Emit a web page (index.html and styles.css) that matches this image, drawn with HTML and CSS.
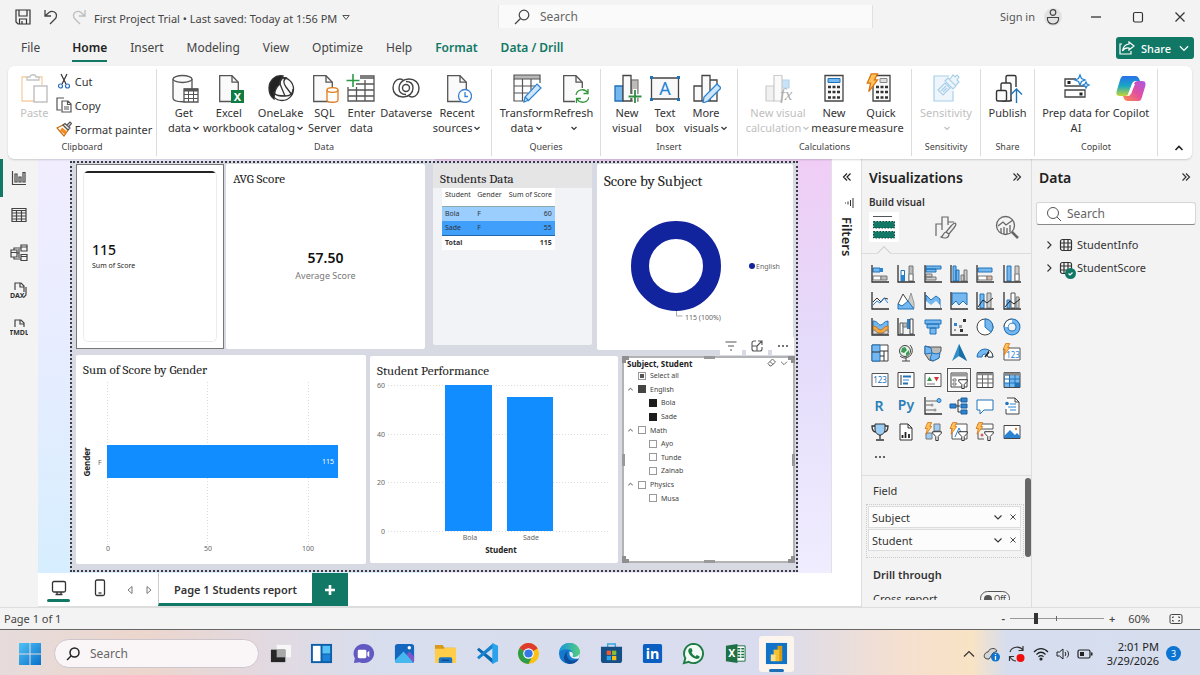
FILE: index.html
```html
<!DOCTYPE html>
<html lang="en">
<head>
<meta charset="utf-8">
<title>First Project Trial</title>
<link rel="stylesheet" href="styles.css">
</head>
<body>
<svg class="defs" aria-hidden="true">
  <symbol id="chev" viewBox="0 0 8 8"><path d="M1.500 3 4 5.500 6.500 3" fill="none" stroke="currentColor" stroke-width="1.200"/></symbol>
  <symbol id="thin" viewBox="0 0 12 12"><path d="M2.500 4.500 6 8l3.500-3.500" fill="none" stroke="currentColor" stroke-width="1.100"/></symbol>
  <symbol id="cross" viewBox="0 0 8 8"><path d="M1.500 1.500l5 5M6.500 1.500l-5 5" fill="none" stroke="currentColor" stroke-width=".9"/></symbol>
  <symbol id="doc" viewBox="0 0 20 28"><path d="M.7.7H13l6.300 6.500V26.500H.7z" fill="#fafafa" stroke="#555" stroke-width="1.300"/><path d="M13 .7v6.500h6.300" fill="none" stroke="#555" stroke-width="1.300"/></symbol>
  <symbol id="bolt" viewBox="0 0 10 16"><path d="M4 .7h5L6.500 5.500H9L2 15l1.500-7H.8z" fill="#ffc35c" stroke="#d9730d" stroke-width="1"/></symbol>
  <symbol id="funnel" viewBox="0 0 10 10"><path d="M.7.7h8.600v1.500L6.200 5.500v4H3.800v-4L.7 2.200z" fill="#fff" stroke="#333" stroke-width="1"/></symbol>
  <symbol id="dbl" viewBox="0 0 10 10"><path d="M1.500 1.500 5 5 1.500 8.500M5 1.500 8.500 5 5 8.500" fill="none" stroke="currentColor" stroke-width="1.200"/></symbol>
</svg>

<header class="titlebar">
  <div class="quick">
    <button class="plain" aria-label="Save"><svg width="16" height="16" viewBox="0 0 16 16" fill="none" stroke="#333" stroke-width="1.200"><path d="M1 1h14v14H3l-2-2zM4 1v6h8V1M4.500 15v-5h7v5M7 12v3"/></svg></button>
    <button class="plain" aria-label="Undo"><svg width="16" height="16" viewBox="0 0 16 16" fill="none" stroke="#444" stroke-width="1.300"><path d="M2 1v6h6M2 7l4-3.500c3-2.500 7.500-.5 7.500 3 0 1.500-.5 2.500-1.500 3.500l-5 5"/></svg></button>
    <button class="plain" aria-label="Redo" disabled><svg width="16" height="16" viewBox="0 0 16 16" fill="none" stroke="#bdbdbd" stroke-width="1.300"><path d="M14 1v6H8M14 7l-4-3.500c-3-2.500-7.500-.5-7.500 3 0 1.500.5 2.500 1.500 3.500l5 5"/></svg></button>
  </div>
  <button class="plain filename">First Project Trial • Last saved: Today at 1:56 PM <svg width="8" height="8" viewBox="0 0 8 8" fill="none" stroke="#555"><path d="M.8 1.500h6.400L4 5.500z"/></svg></button>
  <label class="topsearch"><svg width="16" height="16" viewBox="0 0 16 16" fill="none" stroke="#444" stroke-width="1.200"><circle cx="10" cy="6" r="4.800"/><path d="M6.500 9.500 1 15"/></svg><input type="search" placeholder="Search" aria-label="Search"></label>
  <div class="account"><button class="plain">Sign in</button><span class="avatar"><svg width="18" height="18" viewBox="0 0 18 18" fill="none" stroke="#444" stroke-width="1.200"><circle cx="9" cy="4.500" r="2.800"/><path d="M3.500 9.500h11c.8 4-2 6.500-5.500 6.500s-6.300-2.500-5.500-6.500z"/></svg></span></div>
  <div class="winbtns">
    <button class="plain" aria-label="Minimize"><svg width="12" height="12" viewBox="0 0 12 12" stroke="#333" stroke-width="1.300"><path d="M1 6h10"/></svg></button>
    <button class="plain" aria-label="Maximize"><svg width="12" height="12" viewBox="0 0 12 12" fill="none" stroke="#333" stroke-width="1.200"><rect x="1.500" y="1.500" width="9" height="9.500" rx="1.500"/></svg></button>
    <button class="plain" aria-label="Close"><svg width="12" height="12" viewBox="0 0 12 12" stroke="#333" stroke-width="1.200"><path d="M1.500 1.500l9 9M10.500 1.500l-9 9"/></svg></button>
  </div>
</header>

<nav class="tabs">
  <button class="tab">File</button><button class="tab active">Home</button><button class="tab">Insert</button><button class="tab">Modeling</button><button class="tab">View</button><button class="tab">Optimize</button><button class="tab">Help</button><button class="tab ctx">Format</button><button class="tab ctx">Data / Drill</button>
  <button class="share"><svg width="16" height="14" viewBox="0 0 16 14" fill="none" stroke="#fff" stroke-width="1.200"><path d="M3 3H1v10h11v-3"/><path d="M10 1l5 4-5 4V7C7 6.500 5 7.500 3.500 10 4 6 6.500 3.500 10 3z"/></svg>Share<svg width="14" height="14"><use href="#thin"/></svg></button>
</nav>

<section class="ribbon">
  <div class="group">
    <div class="items clip">
      <button class="rb off"><svg width="30" height="30" viewBox="0 0 30 30" fill="none" stroke-width="1.300"><path d="M8 4H3v24h13" stroke="#f7cfa5"/><path d="M20 4h3v8" stroke="#f7cfa5"/><path d="M8 7V4h3c0-3 6-3 6 0h3v3z" stroke="#c4c4c4" fill="#fff"/><rect x="15" y="13" width="13" height="16" stroke="#b9b9b9" fill="#fff"/></svg><span>Paste</span></button>
      <div class="stack">
        <button class="row"><svg width="16" height="16" viewBox="0 0 16 16" fill="none" stroke="#333" stroke-width="1.200"><path d="M5 1l5 10M11 1L6 11"/><circle cx="4.500" cy="13" r="2" stroke="#2a6fc4"/><circle cx="11.500" cy="13" r="2" stroke="#2a6fc4"/></svg>Cut</button>
        <button class="row"><svg width="16" height="16" viewBox="0 0 16 16" fill="none" stroke="#555" stroke-width="1.200"><path d="M5 13H1V1h7"/><path d="M6 4h6l3 3v8H6zM11.500 4v3.500H15M8 10h5M8 12h5" fill="#fff"/></svg>Copy</button>
        <button class="row"><svg width="16" height="16" viewBox="0 0 16 16" fill="none" stroke="#555" stroke-width="1.200"><path d="M1 7l6-3 5 5-4 6z" fill="#fff" stroke="#c66a13"/><path d="M4 9.500l5 4 2-3-5-4z" fill="#f28a1e" stroke="none"/><path d="M7 4l2-1.500L14 7l-2 2zM11 4l3-3 1.500 1.500L12.500 6" fill="#eee"/></svg>Format painter</button>
      </div>
    </div>
    <div class="glabel">Clipboard</div>
  </div>
  <div class="group">
    <div class="items sources">
      <button class="rb"><svg width="30" height="30" viewBox="0 0 30 30" fill="#fafafa" stroke="#555" stroke-width="1.300"><path d="M4 6v19c0 5 19 5 19 0V6"/><ellipse cx="13.500" cy="6" rx="9.500" ry="3.500"/><path d="M15 16h14v13H15z" fill="#fff"/><path d="M15 17h14" stroke-width="3"/><path d="M15 21.500h14M15 25.500h14M19.500 17v12M24.500 17v12" stroke-width="1"/></svg><span>Get<br>data<svg class="cv"><use href="#chev"/></svg></span></button>
      <button class="rb"><svg width="30" height="30" viewBox="0 0 30 30"><use href="#doc" x="5" y="2" width="20" height="28"/><path d="M17 17h13v13H17z" fill="#107c41"/><text x="23.500" y="28" text-anchor="middle" font-size="11" font-weight="700" fill="#fff">X</text></svg><span>Excel<br>workbook</span></button>
      <button class="rb"><svg width="30" height="30" viewBox="0 0 30 30" fill="none" stroke="#333" stroke-width="1.300"><circle cx="16" cy="16" r="11.500" fill="#fafafa"/><path d="M17 3C9 1 3 8 3 15c0 5 2 9 5 11 0-8 2-12 6-15 0-4 1-6 3-8z" fill="#222"/><path d="M14 11c0-5 3-7 7-6-4 1-4 5-1 9l6 8M14 11l5 12c-5 0-9 0-12-4M19 23c5 0 8-2 8-7"/></svg><span>OneLake<br>catalog<svg class="cv"><use href="#chev"/></svg></span></button>
      <button class="rb"><svg width="30" height="30" viewBox="0 0 30 30" fill="none"><use href="#doc" x="4" y="2" width="20" height="28"/><path d="M18 17v10c0 3 11 3 11 0V17" fill="#fff" stroke="#e07b1c" stroke-width="1.300"/><ellipse cx="23.500" cy="17" rx="5.500" ry="2.300" fill="#fff" stroke="#e07b1c" stroke-width="1.300"/></svg><span>SQL<br>Server</span></button>
      <button class="rb"><svg width="30" height="30" viewBox="0 0 30 30" fill="none" stroke="#555" stroke-width="1.300"><path d="M2 14v14h26V3H14M14 5h14M10 11h18M2 17h26M2 23h26M10.500 14v14M19 7v21"/><path d="M7 1v13M.5 7.500h13" stroke="#2e9a45" stroke-width="1.600"/></svg><span>Enter<br>data</span></button>
      <button class="rb"><svg width="30" height="30" viewBox="0 0 30 30" fill="none" stroke="#444" stroke-width="1.400"><circle cx="15" cy="15" r="3.500"/><path d="M15 8.500c5 0 7 3 7 6.500 0 5-4 9-10 9C6 24 2 20 2 15S5 6 9 6c1.500 0 2.500.5 3.500 1.500"/><path d="M15 21.500c-5 0-7-3-7-6.500 0-5 4-9 10-9 6 0 10 4 10 9s-3 9-7 9c-1.500 0-2.500-.5-3.500-1.500"/></svg><span>Dataverse</span></button>
      <button class="rb"><svg width="30" height="30" viewBox="0 0 30 30"><use href="#doc" x="5" y="2" width="20" height="28"/><circle cx="23" cy="23" r="6.500" fill="#fff" stroke="#3b82cf" stroke-width="1.300"/><path d="M23 19v4.500h3" fill="none" stroke="#3b82cf" stroke-width="1.300"/></svg><span>Recent<br>sources<svg class="cv"><use href="#chev"/></svg></span></button>
    </div>
    <div class="glabel">Data</div>
  </div>
  <div class="group">
    <div class="items queries">
      <button class="rb"><svg width="30" height="30" viewBox="0 0 30 30" fill="none" stroke="#555" stroke-width="1.200"><path d="M2 2h26v4H2z" fill="#b8b8b8"/><path d="M28 6v4M2 6v22h10M2 13h21M2 20h14M10.500 6v22M19 6v11"/><path d="M25 11l4 4-12 12-5 2 1-5z" fill="#cfe7fb" stroke="#2b83d1"/><path d="M13 24l4 4" stroke="#2b83d1"/></svg><span>Transform<br>data<svg class="cv"><use href="#chev"/></svg></span></button>
      <button class="rb"><svg width="30" height="30" viewBox="0 0 30 30"><use href="#doc" x="4" y="2" width="20" height="28"/><path d="M16 15h14v15H16z" fill="#fff"/><path d="M17 22c1-6 9-7 12-2M29 16v4.500h-4.500M30 24c-1 6-9 7-12 2M17.500 30v-4.500H22" fill="none" stroke="#35963f" stroke-width="1.300"/></svg><span>Refresh<br><svg class="cv"><use href="#chev"/></svg></span></button>
    </div>
    <div class="glabel">Queries</div>
  </div>
  <div class="group">
    <div class="items insert">
      <button class="rb"><svg width="30" height="30" viewBox="0 0 30 30" stroke-width="1.300"><path d="M3 13h8v15H3z" fill="#75b8f0" stroke="#1f6fb8"/><path d="M19 7h7v21h-7z" fill="#bdbab7" stroke="#888"/><path d="M11 2.500h8V28h-8z" fill="#fafafa" stroke="#444"/><path d="M23 16v14M16 23h14" stroke="#fff" stroke-width="4"/><path d="M23 17v13M16.500 23.500h13" stroke="#2e8f43" stroke-width="1.800"/></svg><span>New<br>visual</span></button>
      <button class="rb"><svg width="30" height="30" viewBox="0 0 30 30"><path d="M1.500 5h27v21h-27z" fill="#f8f8f8" stroke="#444" stroke-width="1.300"/><path d="M0 3h3v3H0zM27 3h3v3h-3zM0 25h3v3H0zM27 25h3v3h-3z" fill="#2173b9"/><text x="15" y="22" text-anchor="middle" font-size="18" fill="#2584d6">A</text></svg><span>Text<br>box</span></button>
      <button class="rb"><svg width="30" height="30" viewBox="0 0 30 30" fill="#fafafa" stroke="#444" stroke-width="1.300"><path d="M3 13h8v15H3zM19 7h7v21h-7zM11 2.500h8V28h-8z"/><path d="M26 11l4 4-13 13-5 2 1-6z" fill="#cfe7fb" stroke="#2b83d1"/></svg><span>More<br>visuals<svg class="cv"><use href="#chev"/></svg></span></button>
    </div>
    <div class="glabel">Insert</div>
  </div>
  <div class="group">
    <div class="items calc">
      <button class="rb off"><svg width="30" height="30" viewBox="0 0 30 30" fill="#f1f1f1" stroke="#ccc" stroke-width="1.200"><path d="M3 13h8v15H3z"/><path d="M19 7h7v8h-7z" fill="#c9e2f7" stroke="#b3d3ee"/><path d="M11 2.500h8V28h-8z" fill="#fafafa"/><text class="fx" x="17" y="27" font-size="17" fill="#aaa" stroke="none">fx</text></svg><span>New visual<br>calculation<svg class="cv"><use href="#chev"/></svg></span></button>
      <button class="rb"><svg width="30" height="30" viewBox="0 0 30 30"><path d="M6 2.500h18V28H6z" fill="#fafafa" stroke="#444" stroke-width="1.300"/><path d="M9 5.500h12v4H9z" fill="#75b8f0" stroke="#2173b9"/><path d="M9 14h12M9 19h12M9 24.500h12" stroke="#333" stroke-width="2.600" stroke-dasharray="3 1.500"/></svg><span>New<br>measure</span></button>
      <button class="rb"><svg width="30" height="30" viewBox="0 0 30 30"><path d="M7 2.500h17V28H7z" fill="#fafafa" stroke="#444" stroke-width="1.300"/><path d="M14 5.500h7v4h-7z" fill="#ddd" stroke="#888"/><path d="M10 14h12M10 19h12M10 24.500h12" stroke="#333" stroke-width="2.600" stroke-dasharray="3 1.500"/><use href="#bolt" x="0" y="0" width="13" height="20"/></svg><span>Quick<br>measure</span></button>
    </div>
    <div class="glabel">Calculations</div>
  </div>
  <div class="group">
    <div class="items one">
      <button class="rb off"><svg width="30" height="30" viewBox="0 0 30 30" fill="#eef6fc" stroke="#a9cfe9" stroke-width="1.200"><path d="M18 3H3v25h19V18"/><path d="M7 17l7-7 5 5-7 7zM10 18l5-5M12 19l4-4"/><path d="M14 8l3-3 8 8-3 3zM19 6l3-4 2 2 2-2 2 2-2 3 2 2-3 3"/></svg><span>Sensitivity<br><svg class="cv"><use href="#chev"/></svg></span></button>
    </div>
    <div class="glabel">Sensitivity</div>
  </div>
  <div class="group">
    <div class="items one">
      <button class="rb"><svg width="30" height="30" viewBox="0 0 30 30" fill="#fafafa" stroke="#333" stroke-width="1.400"><rect x="13" y="2.500" width="10" height="25" rx="1.500"/><rect x="8" y="10" width="10" height="18" rx="1.500"/><rect x="3.500" y="17.500" width="10" height="10.500" rx="1.500"/><path d="M19 14h11v16H19z" fill="#fff" stroke="none"/><path d="M23.500 30V16M18 21.500l5.500-5.500 5.500 5.500" fill="none" stroke="#2173b9"/></svg><span>Publish</span></button>
    </div>
    <div class="glabel">Share</div>
  </div>
  <div class="group">
    <div class="items copilot">
      <button class="rb"><svg width="30" height="30" viewBox="0 0 30 30" fill="none" stroke="#444" stroke-width="1.300"><path d="M15 6H4v7h20"/><path d="M4 17h20v7H4z"/><path d="M6.500 8h3v3h-3zM18.500 19.500h3v3h-3z" fill="#222" stroke="none"/><path d="M19 2l1.500 3.500L24 7l-3.500 1.500L19 12l-1.500-3.500L14 7l3.500-1.500z" stroke="#2584d6" fill="#fff"/><path d="M25 9l1 2 2 1-2 1-1 2-1-2-2-1 2-1z" stroke="#2584d6" fill="#fff"/></svg><span>Prep data for<br>AI</span></button>
      <button class="rb"><svg width="30" height="30" viewBox="0 0 30 30"><defs><linearGradient id="cpa" x1="0" y1="0" x2="0" y2="1"><stop offset="0" stop-color="#2870ea"/><stop offset=".5" stop-color="#18a8c4"/><stop offset="1" stop-color="#c8d532"/></linearGradient><linearGradient id="cpb" x1="1" y1="0" x2="0" y2="1"><stop offset="0" stop-color="#a957e8"/><stop offset=".5" stop-color="#e34fa0"/><stop offset="1" stop-color="#ff8d48"/></linearGradient></defs><path d="M7 3h12c3 0 4 2 5 5h-5c-2 0-3 2-4 6l-2 6c-1 3-3 3-5 3H4c-4 0-4-3-3-6L4 7c1-3 2-4 3-4z" fill="url(#cpa)"/><path d="M23 28H12c-3 0-4-2-5-5h5c2 0 3-2 4-6l2-6c1-3 3-3 5-3h3c4 0 4 3 3 6l-3 10c-1 3-2 4-3 4z" fill="url(#cpb)"/><path d="M16 11h3l-4 10h-3z" fill="#fff"/></svg><span>Copilot</span></button>
    </div>
    <div class="glabel">Copilot</div>
  </div>
  <button class="plain collapse" aria-label="Collapse ribbon"><svg width="10" height="8" viewBox="0 0 10 8" fill="none" stroke="#222" stroke-width="1.600"><path d="M1.500 6 5 2.500 8.500 6"/></svg></button>
</section>

<main class="work">
  <nav class="rail">
    <button class="plain on" aria-label="Report view"><svg width="16" height="16" viewBox="0 0 16 16" fill="none" stroke="#444" stroke-width="1.200"><path d="M1.500 1v13.500H15M4 12V4h2v8zM8 12V7h2v5zM12 12V2.500h2V12z"/></svg></button>
    <button class="plain" aria-label="Table view"><svg width="16" height="16" viewBox="0 0 16 16" fill="none" stroke="#444" stroke-width="1.200"><path d="M1 1.500h14v13H1zM1 3.500h14M1 6h14M1 9h14M1 12h14M5.500 4v10M10.500 4v10"/></svg></button>
    <button class="plain" aria-label="Model view"><svg width="18" height="18" viewBox="0 0 18 18" fill="none" stroke="#444" stroke-width="1.200"><path d="M1 6h6v7H1zM1 8.500h6M11 1h6v6h-6zM11 3h6M11 10.500h6v6h-6zM11 12.500h6M4 6V4h7M4 13v2h7M7 9h2V5M9 9v5"/></svg></button>
    <button class="plain" aria-label="DAX query view"><svg width="18" height="18" viewBox="0 0 18 18" fill="none" stroke="#444" stroke-width="1.200"><path d="M5 8V1h6l3 3v6M10 1v4h4M16 5v8l-2 2"/><text x="0" y="16" font-size="7" font-weight="700" fill="#333" stroke="none">DAX</text></svg></button>
    <button class="plain" aria-label="TMDL view"><svg width="18" height="18" viewBox="0 0 18 18" fill="none" stroke="#444" stroke-width="1.200"><path d="M5 8V1h6l3 3v4M10 1v4h4"/><text x="9" y="16" text-anchor="middle" font-size="7" font-weight="700" fill="#333" stroke="none">TMDL</text></svg></button>
  </nav>

  <div class="center">
    <div class="stage">
      <div class="canvas">
        <div class="page">
          <div class="vrow top">
            <article class="visual selected-card"><div class="kcard"><b>115</b><span>Sum of Score</span></div></article>
            <article class="visual avg"><h3>AVG Score</h3><div class="kpi"><b>57.50</b><span>Average Score</span></div></article>
            <article class="visual students"><h3>Students Data</h3>
              <table>
                <thead><tr><th>Student</th><th>Gender</th><th class="n">Sum of Score</th></tr></thead>
                <tbody><tr class="r1"><td>Bola</td><td>F</td><td class="n">60</td></tr><tr class="r2"><td>Sade</td><td>F</td><td class="n">55</td></tr></tbody>
                <tfoot><tr><td>Total</td><td></td><td class="n">115</td></tr></tfoot>
              </table>
            </article>
            <article class="visual subject"><h3>Score by Subject</h3>
              <svg class="chart" viewBox="0 0 196 160" role="img" aria-label="Score by Subject"><circle cx="79" cy="77" r="36" fill="none" stroke="#12239e" stroke-width="18"/><path d="M79.500 122v5h6" fill="none" stroke="#aaa"/><text x="88" y="131" class="ax">115 (100%)</text><circle cx="155" cy="77" r="3" fill="#12239e"/><text x="159" y="80" class="ax">English</text></svg>
            </article>
          </div>
          <div class="vrow bottom">
            <article class="visual"><h3>Sum of Score by Gender</h3>
              <svg class="chart" viewBox="0 0 290 184" role="img" aria-label="Sum of Score by Gender"><path d="M31.500 4v164M131.500 4v164M232.500 4v164" stroke="#ddd" stroke-dasharray="1 2"/><path d="M31 67h231v33H31z" fill="#118dff"/><text x="258" y="86" class="ax white" text-anchor="end">115</text><text x="22" y="87" class="ax">F</text><text x="32" y="173" class="ax" text-anchor="middle">0</text><text x="132" y="173" class="ax" text-anchor="middle">50</text><text x="232" y="173" class="ax" text-anchor="middle">100</text><text class="axt" text-anchor="middle" transform="translate(14 84) rotate(-90)">Gender</text></svg>
            </article>
            <article class="visual perf"><h3>Student Performance</h3>
              <svg class="chart" viewBox="0 0 248 184" role="img" aria-label="Student Performance"><path d="M18 6.500h220M18 55.500h220M18 103.500h220M18 152.500h220" stroke="#ddd" stroke-dasharray="1 2"/><path d="M75 6h47v146H75zM137 18h46v134h-46z" fill="#118dff"/><g class="ax" text-anchor="end"><text x="15" y="9">60</text><text x="15" y="58">40</text><text x="15" y="106">20</text><text x="15" y="155">0</text></g><text x="100" y="161" class="ax" text-anchor="middle">Bola</text><text x="161" y="161" class="ax" text-anchor="middle">Sade</text><text x="131" y="174" class="axt" text-anchor="middle">Student</text></svg>
            </article>
            <article class="visual slicer">
              <div class="vtools"><button class="plain" aria-label="Filters"><svg width="12" height="12" viewBox="0 0 12 12" stroke="#555" stroke-width="1.200"><path d="M.5 2h11M3 6h6M5 10h2"/></svg></button><button class="plain" aria-label="Focus mode"><svg width="12" height="12" viewBox="0 0 12 12" fill="none" stroke="#555" stroke-width="1.100"><path d="M5 1H3Q1 1 1 3v6q0 2 2 2h6q2 0 2-2V7M7 1h4v4M11 1 6 6M1 6h5v5"/></svg></button><button class="plain" aria-label="More options"><svg width="12" height="12" viewBox="0 0 12 12" fill="#444"><circle cx="2" cy="6" r="1"/><circle cx="6" cy="6" r="1"/><circle cx="10" cy="6" r="1"/></svg></button></div>
              <i class="h tl"></i><i class="h tc"></i><i class="h tr"></i><i class="h ml"></i><i class="h mr"></i><i class="h bl"></i><i class="h bc"></i><i class="h br"></i>
              <div class="shead"><b>Subject, Student</b><svg width="9" height="9" viewBox="0 0 9 9" fill="none" stroke="#666"><path d="M1 5.500 5.500 1 8.500 4 4 8H3zM3 3.500 6 6.500"/></svg><svg width="10" height="10"><use href="#thin"/></svg></div>
              <div class="slist">
                <label><input type="checkbox" class="some">Select all</label>
                <label class="par"><svg class="up"><use href="#chev"/></svg><input type="checkbox" class="grayed" checked>English</label>
                <label class="kid"><input type="checkbox" checked>Bola</label>
                <label class="kid"><input type="checkbox" checked>Sade</label>
                <label class="par"><svg class="up"><use href="#chev"/></svg><input type="checkbox">Math</label>
                <label class="kid"><input type="checkbox">Ayo</label>
                <label class="kid"><input type="checkbox">Tunde</label>
                <label class="kid"><input type="checkbox">Zainab</label>
                <label class="par"><svg class="up"><use href="#chev"/></svg><input type="checkbox">Physics</label>
                <label class="kid"><input type="checkbox">Musa</label>
              </div>
            </article>
          </div>
        </div>
      </div>
      <aside class="filters"><button class="plain flip" aria-label="Expand filters"><svg width="10" height="10"><use href="#dbl"/></svg></button><svg width="10" height="10" viewBox="0 0 10 10" stroke="#333"><path d="M9 0v10M6.500 2v6M4 3.500v3M1.500 4.500v1"/></svg><span>Filters</span></aside>
    </div>
    <div class="pages">
      <button class="plain dev on" aria-label="Desktop layout"><svg width="16" height="16" viewBox="0 0 16 16" fill="none" stroke="#333" stroke-width="1.300"><rect x="1.500" y="1.500" width="13" height="10.500" rx="1.500"/><path d="M4.500 14.500h7M6 12v2.500M10 12v2.500"/></svg></button>
      <button class="plain dev" aria-label="Mobile layout"><svg width="12" height="18" viewBox="0 0 12 18" fill="none" stroke="#333" stroke-width="1.300"><rect x="1.500" y="1" width="9" height="15.500" rx="1.500"/><path d="M4.500 14h3"/></svg></button>
      <button class="plain arr" aria-label="Previous page"><svg width="8" height="10" viewBox="0 0 8 10" fill="none" stroke="#777"><path d="M6 1.500v7L2 5z"/></svg></button>
      <button class="plain arr" aria-label="Next page"><svg width="8" height="10" viewBox="0 0 8 10" fill="none" stroke="#777"><path d="M2 1.500v7L6 5z"/></svg></button>
      <button class="ptab">Page 1 Students report</button>
      <button class="padd" aria-label="New page"><svg width="12" height="12" viewBox="0 0 12 12" stroke="#fff" stroke-width="2.600"><path d="M6 1v10M1 6h10"/></svg></button>
    </div>
  </div>

  <aside class="viz">
    <div class="phead"><h2>Visualizations</h2><button class="plain" aria-label="Collapse"><svg width="10" height="10"><use href="#dbl"/></svg></button></div>
    <div class="sub">Build visual</div>
    <div class="modes">
      <button class="plain mode on" aria-label="Build visual"><svg width="26" height="26" viewBox="0 0 26 26"><path d="M2 2.500h19" stroke="#555" stroke-width="1"/><path d="M2.500 7.500h21v6.500h-21zM2.500 17.500h21v6.500h-21z" fill="#117865" stroke="#0a4a3e" stroke-dasharray="1.500 1.500"/></svg></button>
      <button class="plain mode" aria-label="Format visual"><svg width="24" height="24" viewBox="0 0 24 24" fill="none" stroke="#666" stroke-width="1.200"><path d="M2 21V9h6v6M8 9V2h6v8M14 7h6M8 15v-6"/><path d="M21 8c2 1 0 3-1 5l-5 6-3-2 5-6c2-2 3-3 4-3zM12 17c-3 0-2 4-5 5 4 2 8 1 8-3" fill="#eee"/></svg></button>
      <button class="plain mode" aria-label="Analytics"><svg width="24" height="24" viewBox="0 0 24 24" fill="none" stroke="#666" stroke-width="1.300"><circle cx="10.500" cy="10.500" r="9"/><path d="M17 17l6 6" stroke-width="2.500"/><path d="M3 11l5-4 3 3 7-5M6 18v-5M9 19v-7M12 19v-6M15 17v-7"/></svg></button>
    </div>
    <div class="vgrid">
      <button class="plain" aria-label="Stacked bar chart"><svg viewBox="0 0 18 18"><path d="M2 3h7v4H2z" fill="#75b8f0" stroke="#2173b9"/><path d="M9 3h3v4H9z" fill="#2b83d1"/><path d="M2 11h8v4H2z" fill="#fff" stroke="#777"/><path d="M10 11h6v4h-6z" fill="#bbb" stroke="#777"/><path class="axis" d="M1 0v17h17"/></svg></button>
      <button class="plain" aria-label="Stacked column chart"><svg viewBox="0 0 18 18"><path d="M4 5.500h3.500V16H4z" fill="#fff" stroke="#2173b9"/><path d="M4 10h3.500v6H4z" fill="#2b83d1"/><path d="M12 1h4v15h-4z" fill="#bbb" stroke="#777"/><path d="M12 9h4v7h-4z" fill="#fff" stroke="#777"/><path class="axis" d="M1 0v17h17"/></svg></button>
      <button class="plain" aria-label="Clustered bar chart"><svg viewBox="0 0 18 18"><path d="M2 1h15v3H2zM2 4h10v3H2z" fill="#75b8f0" stroke="#2173b9"/><path d="M2 9h6v3H2zM2 12h10v3H2z" fill="#ccc" stroke="#777"/><path class="axis" d="M1 0v17h17"/></svg></button>
      <button class="plain" aria-label="Clustered column chart"><svg viewBox="0 0 18 18"><path d="M3 1h3v15H3zM6 5h3v11H6z" fill="#75b8f0" stroke="#2173b9"/><path d="M11 10h3v6h-3zM14 5h3v11h-3z" fill="#ccc" stroke="#777"/><path class="axis" d="M1 0v17h17"/></svg></button>
      <button class="plain" aria-label="100% stacked bar chart"><svg viewBox="0 0 18 18"><path d="M2 3h14v4H2z" fill="#75b8f0" stroke="#2173b9"/><path d="M2 11h9v4H2z" fill="#fff" stroke="#777"/><path d="M11 11h5v4h-5z" fill="#d9b8a6" stroke="#777"/><path class="axis" d="M1 0v17h17"/></svg></button>
      <button class="plain" aria-label="100% stacked column chart"><svg viewBox="0 0 18 18"><path d="M4 1h4v15H4z" fill="#75b8f0" stroke="#2173b9"/><path d="M12 1h4v15h-4z" fill="#ccc" stroke="#777"/><path d="M12 9h4v7h-4z" fill="#fff" stroke="#777"/><path class="axis" d="M1 0v17h17"/></svg></button>

      <button class="plain" aria-label="Line chart"><svg viewBox="0 0 18 18" fill="none"><path d="M2 10l4-4 4 4 3-4 4 1" stroke="#333"/><path d="M2 13l4-4 3 2 4-5 4 5" stroke="#2b83d1"/><path class="axis" d="M1 0v17h17"/></svg></button>
      <button class="plain" aria-label="Area chart"><svg viewBox="0 0 18 18"><path d="M9 16 14 1l3 10v5z" fill="#ccc" stroke="#999"/><path d="M1 12 6 2l6 9-5 5z" fill="#fff" stroke="#444"/><path d="M1 17v-5l4 2 6-5 6 8z" fill="#75b8f0" stroke="#2173b9"/></svg></button>
      <button class="plain" aria-label="Stacked area chart"><svg viewBox="0 0 18 18"><path d="M2 3l5 5 5-4 4 3v9H2z" fill="#75b8f0" stroke="#2173b9"/><path d="M2 16V9l5 4 5-4 4 4v3z" fill="#f3f3f3"/><path class="axis" d="M1 0v17h17"/></svg></button>
      <button class="plain" aria-label="100% stacked area chart"><svg viewBox="0 0 18 18"><path d="M2 1h15v12l-4-4-4 4-3-4-4 4z" fill="#75b8f0" stroke="#2173b9"/><path class="axis" d="M1 0v17h17"/></svg></button>
      <button class="plain" aria-label="Line and stacked column chart"><svg viewBox="0 0 18 18"><path d="M4 2h4v14H4z" fill="#75b8f0" stroke="#2173b9"/><path d="M11 1h4v15h-4z" fill="#ccc" stroke="#777"/><path d="M2 15l5-7 4 3 6-5" fill="none" stroke="#222"/><path class="axis" d="M1 0v17h17"/></svg></button>
      <button class="plain" aria-label="Line and clustered column chart"><svg viewBox="0 0 18 18"><path d="M4 8h3v8H4z" fill="#75b8f0" stroke="#2173b9"/><path d="M8 1h4v15H8z" fill="#fff" stroke="#555"/><path d="M13 5h3v11h-3z" fill="#ccc" stroke="#777"/><path d="M2 15l5-6 4 3 6-5" fill="none" stroke="#222"/><path class="axis" d="M1 0v17h17"/></svg></button>

      <button class="plain" aria-label="Ribbon chart"><svg viewBox="0 0 18 18"><path d="M2 3c5 0 5 4 7.500 4S13 3 17 3v12H2z" fill="#75b8f0" stroke="#2173b9"/><path d="M2 8c4 0 5 4 7.500 4S13 8 17 8v7H2z" fill="#f5a742" stroke="#c9741a"/><path d="M2 12c4 0 3 4 7.500 4S13 12 17 12v4H2z" fill="#ddd" stroke="#777"/><path class="axis" d="M1 0v17h17"/></svg></button>
      <button class="plain" aria-label="Waterfall chart"><svg viewBox="0 0 18 18"><path d="M3 5h3v11H3z" fill="#fff" stroke="#555"/><path d="M6 5h4v4H6z" fill="#bbb" stroke="#777"/><path d="M10 1h3v10h-3z" fill="#2b83d1"/><path d="M13 1h3v15h-3z" fill="#fff" stroke="#444"/><path class="axis" d="M1 0v17h17"/></svg></button>
      <button class="plain" aria-label="Funnel chart"><svg viewBox="0 0 18 18"><path d="M1 2h16v4H1zM3 6h12v4H3zM6 10h6v6H6z" fill="#75b8f0" stroke="#2173b9"/></svg></button>
      <button class="plain" aria-label="Scatter chart"><svg viewBox="0 0 18 18"><path d="M13 1h3v3h-3zM10 11h3v3h-3z" fill="#333"/><path d="M4 5h3v3H4z" fill="#2b83d1"/><path d="M9 7h3v3H9zM4 11h2v2H4z" fill="#999"/><path class="axis" d="M1 0v17h17"/></svg></button>
      <button class="plain" aria-label="Pie chart"><svg viewBox="0 0 18 18"><circle cx="9" cy="9" r="8" fill="#fff" stroke="#444"/><path d="M9 1a8 8 0 0 1 6 13.300L9 9z" fill="#75b8f0" stroke="#2173b9"/></svg></button>
      <button class="plain" aria-label="Donut chart"><svg viewBox="0 0 18 18" fill="none"><circle cx="9" cy="9" r="6" stroke="#2173b9" stroke-width="5"/><circle cx="9" cy="9" r="6" stroke="#75b8f0" stroke-width="3"/><path d="M3 9a6 6 0 0 1 6-6" stroke="#fff" stroke-width="3.500"/><path d="M1 9a8 8 0 0 1 8-8" stroke="#555"/></svg></button>

      <button class="plain" aria-label="Treemap"><svg viewBox="0 0 18 18"><path d="M1 1h16v16H1z" fill="#fff" stroke="#444"/><path d="M1 1h8v16H1z" fill="#75b8f0" stroke="#2173b9"/><path d="M1 8h8M9 7h8M13 7v10M9 12h4" stroke="#333"/></svg></button>
      <button class="plain" aria-label="Map"><svg viewBox="0 0 18 18" fill="none"><circle cx="8" cy="7" r="5.500" fill="#e5f3e8" stroke="#444"/><path d="M5 4l3-1 2 3-3 3-3-1zM9 9l3-3v4l-3 2z" fill="#3a9c54"/><path d="M13 1c4 4 3 12-5 13-2 0-4-1-5-2M9 14v3M5 17h8" stroke="#444"/></svg></button>
      <button class="plain" aria-label="Filled map"><svg viewBox="0 0 18 18"><path d="M1 2l5 1h11v4l-2 3v4l-6 3-4-1-4-6z" fill="#bbb" stroke="#555"/><path d="M1 2l6 2 1 5-7 1zM8 9l4 1 4-1-1 5-6 3-3-2z" fill="#75b8f0" stroke="#2173b9"/></svg></button>
      <button class="plain" aria-label="Azure map"><svg viewBox="0 0 18 18"><path d="M9 0l8 17-8-5-7 5z" fill="#2f8fc9"/><path d="M9 0v12l8 5z" fill="#1b6fa5"/></svg></button>
      <button class="plain" aria-label="Gauge"><svg viewBox="0 0 18 18"><path d="M1 13a8 8 0 0 1 16 0h-5a3 3 0 0 0-6 0z" fill="#75b8f0" stroke="#2173b9"/><path d="M13 6.200A8 8 0 0 1 17 13h-5l-1-2z" fill="#fff" stroke="#444"/><path d="M9 13l4-5" stroke="#222" stroke-width="1.500"/></svg></button>
      <button class="plain" aria-label="New card"><svg viewBox="0 0 18 18"><path d="M1 4h16v12H1z" fill="#fff" stroke="#555"/><text x="10" y="14" text-anchor="middle" font-size="8" fill="#2b83d1">123</text><use href="#bolt" x="-1" y="-1" width="9" height="13"/></svg></button>

      <button class="plain" aria-label="Card"><svg viewBox="0 0 18 18"><path d="M1 2.500h16v13H1z" fill="#fff" stroke="#555"/><text x="9" y="12" text-anchor="middle" font-size="8" fill="#2173b9">123</text></svg></button>
      <button class="plain" aria-label="Multi-row card"><svg viewBox="0 0 18 18"><path d="M1 1.500h16v15H1z" fill="#fff" stroke="#444"/><path d="M4 4v10" stroke="#333"/><path d="M6 5.500h8M6 12.500h5" stroke="#2173b9" stroke-width="1.800"/><path d="M6 9h6" stroke="#2b83d1"/></svg></button>
      <button class="plain" aria-label="KPI"><svg viewBox="0 0 18 18"><path d="M1 2.500h16v13H1z" fill="#fff" stroke="#555"/><path d="M3 10l2.500-4.500L8 10z" fill="#2e9a45"/><path d="M10 6h5l-2.500 4.500z" fill="#d13438"/><path d="M3 13h8" stroke="#777"/></svg></button>
      <button class="plain picked" aria-label="Slicer"><svg viewBox="0 0 18 18"><path d="M1 2h16v14H1z" fill="#fff" stroke="#444"/><path d="M1 4h16" stroke="#999" stroke-width="3"/><path d="M3 8h3v2H3zM3 12h3v2H3z" fill="none" stroke="#777"/><use href="#funnel" x="8" y="8" width="10" height="10"/></svg></button>
      <button class="plain" aria-label="Table"><svg viewBox="0 0 18 18"><path d="M1 1.500h16v15H1z" fill="#fff" stroke="#444"/><path d="M1 3h16" stroke="#888" stroke-width="2.500"/><path d="M1 8h16M1 12h16M6.500 4v12M12 4v12" stroke="#666"/></svg></button>
      <button class="plain" aria-label="Matrix"><svg viewBox="0 0 18 18"><path d="M1 1.500h16v15H1z" fill="#75b8f0" stroke="#444"/><path d="M1 4.500h16v-3H1z" fill="#888"/><path d="M2 5h5v7H2z" fill="#fff"/><path d="M12 12h5v4h-5z" fill="#2173b9"/><path d="M1 8h16M1 12h16M6.500 4v12M12 4v12" stroke="#2173b9"/></svg></button>

      <button class="plain" aria-label="R script visual"><svg viewBox="0 0 18 18"><text x="8" y="14" text-anchor="middle" font-size="14" font-weight="600" fill="#2b7fb8">R</text></svg></button>
      <button class="plain" aria-label="Python visual"><svg viewBox="0 0 18 18"><text x="9" y="13" text-anchor="middle" font-size="14" font-weight="600" fill="#2b7fb8">Py</text></svg></button>
      <button class="plain" aria-label="Key influencers"><svg viewBox="0 0 18 18" fill="none"><path class="axis" d="M1 0v17h17"/><path d="M2 4h11M2 8h5M2 13h8" stroke="#666"/><circle cx="15" cy="3.500" r="2" fill="#75b8f0" stroke="#2173b9"/><circle cx="8" cy="8" r="1.500" fill="#999"/><circle cx="11" cy="13" r="1.500" fill="#999"/></svg></button>
      <button class="plain" aria-label="Decomposition tree"><svg viewBox="0 0 18 18"><path d="M6 9h4M8 3v12M8 3h3M8 15h3" fill="none" stroke="#333"/><path d="M0 7h6v4H0zM11 1h6v4h-6zM11 7h6v4h-6zM11 13h6v4h-6z" fill="#2b83d1" stroke="#1c5e9e"/></svg></button>
      <button class="plain" aria-label="Q and A"><svg viewBox="0 0 18 18"><path d="M1 3h16v10H8l-4 4v-4H1z" fill="#fff" stroke="#2173b9"/></svg></button>
      <button class="plain" aria-label="Narrative"><svg viewBox="0 0 18 18"><path d="M4 1h8l4 4v12H3v-5M12 1v4h4" fill="#fff" stroke="#444"/><circle cx="4" cy="6.500" r="1.800" fill="#2173b9"/><path d="M7 7h6M5 10h8M7 13h6" stroke="#2b83d1"/></svg></button>

      <button class="plain" aria-label="Metrics"><svg viewBox="0 0 18 18"><path d="M5 3H1c0 4 1 6 4 6M13 3h4c0 4-1 6-4 6M9 12v4M5 17h8" fill="none" stroke="#333" stroke-width="1.300"/><path d="M4 1h10v5c0 3-2 6-5 6S4 9 4 6z" fill="#9ccdf5" stroke="#333"/></svg></button>
      <button class="plain" aria-label="Paginated report"><svg viewBox="0 0 18 18"><path d="M3 1h8l4 4v12H3zM11 1v4h4" fill="#fff" stroke="#333"/><path d="M5.500 15v-3M8.500 15V9M12 15v-4" stroke="#222" stroke-width="1.800"/></svg></button>
      <button class="plain" aria-label="Button slicer"><svg viewBox="0 0 18 18"><path d="M10 1h6v7h-6zM2 10h6v6H2z" fill="#9ccdf5" stroke="#777"/><use href="#bolt" x="0" y="-1" width="9" height="13"/><use href="#funnel" x="8" y="8" width="10" height="10"/></svg></button>
      <button class="plain" aria-label="Text slicer"><svg viewBox="0 0 18 18"><path d="M2 1h15v15H2z" fill="#fff" stroke="#555"/><path d="M5 14l4-9 4 9" fill="none" stroke="#2b83d1"/><use href="#bolt" x="-1" y="-1" width="9" height="13"/><use href="#funnel" x="8" y="8" width="10" height="10"/></svg></button>
      <button class="plain" aria-label="List slicer"><svg viewBox="0 0 18 18"><path d="M2 1h15v5H2zM2 16h6" fill="#fff" stroke="#555"/><circle cx="6" cy="12" r="1.500" fill="#c66"/><path d="M2 10v6" stroke="#555"/><use href="#bolt" x="-1" y="-1" width="9" height="13"/><use href="#funnel" x="8" y="8" width="10" height="10"/></svg></button>
      <button class="plain" aria-label="Image"><svg viewBox="0 0 18 18"><path d="M1 2.500h16v13H1z" fill="#fff" stroke="#444"/><path d="M1 13l6-6 5 5 2-2 3 3v2H1z" fill="#2b83d1"/><circle cx="13" cy="6" r="1.200" fill="#e0803a"/></svg></button>
      <button class="plain" aria-label="Get more visuals"><svg viewBox="0 0 18 18" fill="#333"><circle cx="5" cy="7" r="1"/><circle cx="9" cy="7" r="1"/><circle cx="13" cy="7" r="1"/></svg></button>
    </div>
    <div class="wells">
      <div class="wlabel">Field</div>
      <div class="drop">
        <div class="pill"><span>Subject</span><button class="plain" aria-label="Subject menu"><svg width="12" height="12"><use href="#thin"/></svg></button><button class="plain" aria-label="Remove Subject"><svg width="8" height="8"><use href="#cross"/></svg></button></div>
        <div class="pill"><span>Student</span><button class="plain" aria-label="Student menu"><svg width="12" height="12"><use href="#thin"/></svg></button><button class="plain" aria-label="Remove Student"><svg width="8" height="8"><use href="#cross"/></svg></button></div>
      </div>
      <div class="drill">Drill through</div>
      <div class="cross"><span>Cross-report</span><button class="toggle" role="switch" aria-checked="false">Off</button></div>
      <i class="sbar"></i>
    </div>
  </aside>

  <aside class="fields">
    <div class="phead"><h2>Data</h2><button class="plain" aria-label="Collapse"><svg width="10" height="10"><use href="#dbl"/></svg></button></div>
    <label class="dsearch"><svg width="16" height="16" viewBox="0 0 16 16" fill="none" stroke="#555"><circle cx="7" cy="7" r="5.500"/><path d="M11 11l4 4"/></svg><input type="search" placeholder="Search" aria-label="Search data"></label>
    <button class="plain field"><svg class="right" width="12" height="12"><use href="#thin"/></svg><svg width="14" height="14" viewBox="0 0 14 14" fill="none" stroke="#333" stroke-width="1.200"><rect x="1.500" y="1.500" width="11" height="11" rx="2"/><path d="M1.500 5h11M1.500 9h11M5 1.500v11M9 1.500v11"/></svg>StudentInfo</button>
    <button class="plain field"><svg class="right" width="12" height="12"><use href="#thin"/></svg><svg class="over" width="14" height="14" viewBox="0 0 14 14" fill="none" stroke="#333" stroke-width="1.200"><rect x="1.500" y="1.500" width="11" height="11" rx="2"/><path d="M1.500 5h11M1.500 9h11M5 1.500v11M9 1.500v11"/><circle cx="11.500" cy="12.500" r="5.500" fill="#117865" stroke="none"/><path d="M9.500 12.500l1.500 1.500 2.500-2.500" stroke="#fff"/></svg>StudentScore</button>
  </aside>
</main>

<footer class="status">
  <span>Page 1 of 1</span>
  <div class="zoomer"><button class="plain">-</button><input type="range" min="10" max="200" value="60" aria-label="Zoom"><button class="plain">+</button><span class="pct">60%</span><button class="plain" aria-label="Fit to page"><svg width="14" height="12" viewBox="0 0 14 12" fill="none" stroke="#444"><rect x="1" y="1.500" width="12" height="9" rx="1.500"/><path d="M3.500 5V4h1.500M9 4h1.500v1M3.500 7v1H5M9 8h1.500V7"/></svg></button></div>
</footer>

<div class="taskbar">
  <button class="plain start" aria-label="Start"><svg width="22" height="22" viewBox="0 0 22 22"><defs><linearGradient id="win" x1="0" y1="0" x2="1" y2="1"><stop offset="0" stop-color="#4fc3f7"/><stop offset="1" stop-color="#0a6fc9"/></linearGradient></defs><path d="M0 0h10.500v10.500H0zM11.500 0H22v10.500H11.500zM0 11.500h10.500V22H0zM11.500 11.500H22V22H11.500z" fill="url(#win)"/></svg></button>
  <label class="tsearch"><svg width="14" height="14" viewBox="0 0 14 14" fill="none" stroke="#222" stroke-width="1.500"><circle cx="8.500" cy="5.500" r="4.500"/><path d="M5 9l-4 4"/></svg><input type="search" placeholder="Search" aria-label="Search Windows"></label>
  <div class="apps">
    <button class="plain" aria-label="Task view"><svg viewBox="0 0 24 24"><path d="M8 3h15v13H8z" fill="#f7f7f7"/><path d="M2 8h15v13H2z" fill="#262626"/><path d="M8 8h9v8H8z" fill="#a9a9a9"/></svg></button>
    <button class="plain" aria-label="Widgets"><svg viewBox="0 0 24 24"><path d="M1 2h22v20H1z" fill="#0f5fa8"/><path d="M3 4h8v16H3z" fill="#fff"/><path d="M13 4h8v8h-8z" fill="#57c2f5"/><path d="M13 13h8v7h-8z" fill="#1c84d8"/></svg></button>
    <button class="plain" aria-label="Chat"><svg viewBox="0 0 24 24"><path d="M12 2a10.500 10 0 1 1-4 19l-6 1 1-5A10.500 10 0 0 1 12 2z" fill="#6259c2"/><rect x="6" y="8" width="9" height="9" rx="1.500" fill="#fff"/><path d="M16 11l2-2v7l-2-2z" fill="#fff"/></svg></button>
    <button class="plain" aria-label="Photos"><svg viewBox="0 0 24 24"><rect x="2" y="2" width="20" height="20" rx="3" fill="#1466be"/><path d="M14 13l3-3 5 5v4q0 3-3 3z" fill="#7b57c9"/><path d="M2 19l9-9 10 11q-1 1-3 1H5q-3 0-3-3z" fill="#45b8ef"/><circle cx="17" cy="6" r="1.800" fill="#fff"/></svg></button>
    <button class="plain" aria-label="File Explorer"><svg viewBox="0 0 24 24"><path d="M1 3h8l2 3h11v7H1z" fill="#d99a1c"/><path d="M1 7h9l2-1h11v16H1z" fill="#ffcd4a"/><path d="M5 22v-4q0-2 2-2h10q2 0 2 2v4z" fill="#1b75c4"/><path d="M8 19h8" stroke="#0b4b8a" stroke-width="1.500"/></svg></button>
    <button class="plain" aria-label="Visual Studio Code"><svg viewBox="0 0 24 24"><path d="M1 8l2-2 15 12v5z" fill="#0a69b0"/><path d="M1 16l2 2L18 6V1z" fill="#1583d0"/><path d="M17 1l6 3v16l-6 3z" fill="#2ba3ec"/></svg></button>
    <button class="plain" aria-label="Chrome"><svg viewBox="0 0 24 24"><circle cx="12" cy="12" r="11" fill="#fbc116"/><path d="M12 12L2.500 6.500A11 11 0 0 1 21.500 6.500z" fill="#dc3b2d"/><path d="M12 12L2.500 6.500A11 11 0 0 0 12 23l4-8z" fill="#2d9c4b"/><path d="M12 6.500h9.500L12 12z" fill="#dc3b2d"/><circle cx="12" cy="12" r="5.500" fill="#fff"/><circle cx="12" cy="12" r="4.300" fill="#3578e5"/></svg></button>
    <button class="plain" aria-label="Edge"><svg viewBox="0 0 24 24"><defs><linearGradient id="edge" x1="0" y1="0" x2="1" y2="0"><stop offset="0" stop-color="#1694df"/><stop offset="1" stop-color="#54cf7d"/></linearGradient></defs><circle cx="12" cy="12" r="11" fill="#1478cf"/><path d="M1 11C2 4 7 1 12 1c7 0 11 5 11 10 0 4-4 6-7 5-3-1 0-2-1-5-1-4-10-5-14 0z" fill="url(#edge)"/><path d="M11 9c-3 2-2 8 2 10 3 1 6 0 9-2-3 6-9 7-13 5-4-3-4-10 2-13z" fill="#0d4e9c"/><path d="M12 10c-1 5 3 9 10 7l1-5c-3 4-6 4-8 3 2-2 0-5-3-5z" fill="#e7eef8"/></svg></button>
    <button class="plain" aria-label="Microsoft Store"><svg viewBox="0 0 24 24"><path d="M8 6V2h8v4" fill="none" stroke="#35a8e0" stroke-width="1.500"/><path d="M1 5h22v14q0 3-3 3H4q-3 0-3-3z" fill="#164f86"/><path d="M7 9h4.500v4.500H7z" fill="#ef5a30"/><path d="M12.500 9H17v4.500h-4.500z" fill="#86bd32"/><path d="M7 14.500h4.500V19H7z" fill="#24a6e8"/><path d="M12.500 14.500H17V19h-4.500z" fill="#fbbc14"/></svg></button>
    <button class="plain" aria-label="LinkedIn"><svg viewBox="0 0 24 24"><rect x="2" y="2" width="20" height="20" rx="2" fill="#0a5fc0"/><text x="12" y="18" text-anchor="middle" font-size="15" font-weight="700" fill="#fff">in</text></svg></button>
    <button class="plain" aria-label="WhatsApp"><svg viewBox="0 0 24 24"><path d="M12 2a10 10 0 1 1-5 18.700L2 22l1.500-5A10 10 0 0 1 12 2z" fill="#f3faf5" stroke="#1d7c45" stroke-width="2"/><path d="M8 6.500l2 0 1 3-1 1.500c1 2 2 3 4 4l1.500-1.500 3 1.500c0 2-2 3-4 2.500-4-1-7-4-8-7.500 0-1.500.5-3 1.500-3.500z" fill="#1d7c45"/></svg></button>
    <button class="plain" aria-label="Excel"><svg viewBox="0 0 24 24"><path d="M11 4h11v16H11z" fill="#fff" stroke="#1d7044"/><path d="M14 7h3M18 7h3M14 10h3M18 10h3M14 13h3M18 13h3M14 16h3M18 16h3" stroke="#1d7044" stroke-width="1.600"/><path d="M2 4l12-2v20L2 20z" fill="#1d7044"/><text x="8" y="16" text-anchor="middle" font-size="11" font-weight="700" fill="#fff">X</text></svg></button>
    <button class="plain cur" aria-label="Power BI Desktop"><svg viewBox="0 0 24 24"><path d="M1 1h22v22H1z" fill="#1173c7"/><path d="M13 4h5v16h-5z" fill="#d99a12"/><path d="M9 8h6v12H9z" fill="#f2c230"/><path d="M6 13h5v7H6z" fill="#fbe08a"/></svg></button>
  </div>
  <div class="tray">
    <svg width="14" height="14" viewBox="0 0 14 14" fill="none" stroke="#333" stroke-width="1.200"><path d="M2 9.500 7 4.500l5 5"/></svg>
    <svg width="18" height="16" viewBox="0 0 18 16"><path d="M5 13C-1 13 1 6 5 6c2-5 8-4 9-1l-4 2-4 6z" fill="#d5d5d5" stroke="#444"/><circle cx="12.500" cy="11" r="4.500" fill="#0c74d1"/><path d="M12.500 10v4M12.500 8v1" stroke="#fff" stroke-width="1.300"/></svg>
    <svg width="18" height="18" viewBox="0 0 18 18" fill="none" stroke="#333" stroke-width="1.200"><path d="M2 7C4 1 12 1 15 5M15 1v4.500h-4.500M1.500 16v-4.500H6M2 12c2 3 4 4 6 4"/><circle cx="12.500" cy="13" r="4" fill="#f20d0d" stroke="none"/></svg>
    <svg width="16" height="14" viewBox="0 0 16 14" fill="none" stroke="#222" stroke-width="1.200"><path d="M1 5c4-4.500 10-4.500 14 0M3.500 7.500c3-3 6-3 9 0M5.500 9.800c1.500-1.600 3.500-1.600 5 0"/><circle cx="8" cy="12" r="1" fill="#222"/></svg>
    <svg width="14" height="14" viewBox="0 0 14 14" fill="none" stroke="#222"><path d="M1 5h2.500L7 2v10L3.500 9H1zM9 5c1 1 1 3 0 4M11 3.500c2 2 2 5 0 7"/></svg>
    <svg width="16" height="12" viewBox="0 0 16 12"><rect x="1" y="2" width="12" height="8" rx="1.500" fill="none" stroke="#222" stroke-width="1.200"/><path d="M3 4h4v4H3zM14 4.500h1.500v3H14z" fill="#222"/></svg>
    <div class="clock">2:01 PM<br>3/29/2026</div>
    <span class="badge">3</span>
  </div>
</div>
</body>
</html>
```

FILE: styles.css
```css
* { box-sizing: border-box; }
html, body { height: 100%; }
body {
  margin: 0;
  min-height: 675px;
  display: flex;
  flex-direction: column;
  background: #f3f3f3;
  color: #333;
  font-family: "Noto Sans", "Open Sans", sans-serif;
  font-size: 11px;
}
button, input { font: inherit; color: inherit; }
button { border: 0; background: none; padding: 0; margin: 0; }
svg { display: block; flex: none; }
h2, h3 { margin: 0; }
.defs { position: absolute; width: 0; height: 0; }
.plain { display: flex; align-items: center; justify-content: center; white-space: nowrap; }
input[type="search"] { border: 0; background: none; outline: 0; padding: 0; min-width: 0; flex: 1; font-size: 12px; appearance: none; }
input::placeholder { color: #666; opacity: 1; }

/* title bar */
.titlebar { position: relative; display: flex; align-items: center; height: 33px; padding: 0 9px 0 15px; }
.quick { display: flex; gap: 12px; margin-right: 7px; }
.filename { gap: 5px; color: #444; margin-top: 3px; }
.topsearch { position: absolute; left: 41.5%; right: 27.25%; top: 5px; height: 23px; display: flex; align-items: center; gap: 10px; padding-left: 15px; background: #fafafa; border-left: 1px solid #e6e6e6; border-right: 1px solid #e0e0e0; }
.account { margin-left: auto; display: flex; align-items: center; gap: 9px; color: #555; }
.avatar { width: 18px; height: 18px; border-radius: 9px; background: #e2e2e2; }
.winbtns { display: flex; gap: 30px; margin: 0 5px 0 28px; }

/* tabs */
.tabs { display: flex; align-items: center; gap: 23px; height: 33px; padding: 0 6px 3px 21px; font-size: 12px; }
.tab { color: #444; height: 28px; border-bottom: 2px solid transparent; white-space: nowrap; }
.tab:first-child { margin-right: 9px; }
.tab.active { font-weight: 600; color: #222; border-bottom-color: #117865; }
.tab.ctx { font-weight: 600; color: #117865; }
.share { margin-left: auto; display: flex; align-items: center; justify-content: center; gap: 6px; width: 78px; height: 22px; border-radius: 3px; background: #117865; color: #fff; font-size: 11px; font-weight: 500; }

/* ribbon */
.ribbon {
  display: grid;
  grid-template-columns: 149fr 335fr 109fr 137fr 174fr 69fr 54fr 123fr 34fr;
  height: 93px; margin: 0 8px; background: #fff; border-radius: 6px;
  box-shadow: 0 1px 2px rgba(0, 0, 0, .16); position: relative; z-index: 2;
}
.group { display: flex; flex-direction: column; justify-content: space-between; min-width: 0; margin: 3px 0; padding: 4px 0 3px; border-right: 1px solid #dcdcdc; }
.items { display: grid; align-items: start; }
.items.clip { grid-template-columns: 38fr 100fr; padding-left: 7px; }
.items.sources { grid-template-columns: 38fr 52fr 52fr 36fr 38fr 52fr 50fr; padding: 0 9px 0 8px; }
.items.queries { grid-template-columns: 55fr 39fr; padding: 0 7px; }
.items.insert { grid-template-columns: 36fr 40fr 42fr; padding: 0 10px 0 8px; }
.items.calc { grid-template-columns: 66fr 46fr 48fr; padding: 0 6px 0 7px; }
.items.copilot { grid-template-columns: 70fr 40fr; padding: 0 6px; }
.rb { display: flex; flex-direction: column; align-items: center; gap: 2px; min-width: 0; line-height: 15px; white-space: nowrap; }
.rb > span { width: max-content; }
.off { color: #c0c0c0; }
.cv { display: inline-block; width: 8px; height: 8px; margin-left: 1px; }
.fx { font-family: "Liberation Serif", serif; font-style: italic; }
.stack { display: flex; flex-direction: column; gap: 8px; padding-left: 2px; }
.row { display: flex; align-items: center; gap: 3px; height: 16px; white-space: nowrap; }
.glabel { text-align: center; font-size: 9px; line-height: 12px; color: #444; }
.collapse { align-self: end; justify-self: center; padding: 0 0 7px 8px; }

/* work area */
.work { flex: 1; display: flex; min-height: 0; }
.rail { width: 38px; height: 188px; display: grid; grid-auto-rows: 1fr; }
.rail .on { border-left: 3px solid #117865; padding-right: 3px; }
.center { flex: 1; min-width: 0; display: flex; flex-direction: column; }
.stage { flex: 1; display: flex; min-height: 0; }
.canvas {
  flex: 1; min-width: 0; padding: 2px 33px 1px 32px;
  background: linear-gradient(#f0cdf6, #e4dbfa 45%, #f0edff) right / 50% 100% no-repeat, linear-gradient(#f1edff, #e7edff 45%, #d6eeff);
}
.page { height: 100%; border: 2px dotted #3c3c46; background: #d7dae3; padding: 1px 0 6px 4px; display: flex; flex-direction: column; gap: 5px; }
.vrow { display: grid; min-height: 0; }
.vrow.top { flex: 186; grid-template-columns: 148fr 199fr 168fr 196fr; column-gap: 2px; padding-right: 3px; }
.vrow.bottom { flex: 209; grid-template-columns: 290fr 248fr 174fr; column-gap: 4px; }
.visual { position: relative; background: #fff; border-radius: 2px; min-width: 0; min-height: 0; display: flex; flex-direction: column; }
.visual h3 { font-family: Cambria, "Liberation Serif", serif; font-weight: 400; font-size: 13px; line-height: 16px; color: #222; padding: 7px 0 0 7px; white-space: nowrap; }
.chart { width: 100%; height: auto; font-size: 7px; }
.ax { font-size: 7px; fill: #666; }
.ax.white { fill: #fff; }
.axt { font-size: 8px; font-weight: 700; fill: #222; }
.selected-card { border: 1px solid #777; padding: 6px; border-radius: 0; margin-bottom: 1px; }
.kcard { flex: 1; border: 1px solid #ececec; border-top: 0; border-radius: 5px; background: linear-gradient(#222, #222) top / 100% 2px no-repeat; padding-left: 8px; display: flex; flex-direction: column; justify-content: center; color: #222; font-size: 7px; line-height: 12px; }
.kcard b, .kpi b { font-size: 14px; line-height: 20px; font-weight: 600; color: #111; }
.kcard b { font-weight: 500; }
.kpi { flex: 1; display: flex; flex-direction: column; align-items: center; justify-content: center; font-size: 9px; line-height: 16px; color: #777; padding-bottom: 4px; }
.avg { margin-bottom: 1px; }
.students { background: #f2f3f7; margin: 0 3px 5px 6px; }
.visual.students h3 { background: #e5e5e6; height: 24px; }
.visual.subject h3 { font-size: 15px; padding-top: 9px; }
.students table { width: 71%; margin-left: 9px; border-collapse: collapse; background: #fff; font-size: 7px; line-height: 12px; color: #333; }
.students th { font-weight: 400; text-align: left; padding: 1px 3px 5px; border-bottom: 1px solid #8aa; white-space: nowrap; }
.students td { padding: 1px 3px; }
.students .n { text-align: right; }
.r1 { background: #9bcdfd; }
.r2 { background: #3f9ffb; border-bottom: 1px solid #2266a8; }
.students tfoot { font-weight: 700; }
.perf { margin: 1px 0; }
.slicer { margin: 1px 1px 1px 0; border: 2px solid #b3b3b3; border-radius: 0; }
.h { position: absolute; border: 0 solid #8f8f8f; }
.tl, .tr, .bl, .br { width: 7px; height: 7px; }
.tl { left: -2px; top: -2px; border-width: 4px 0 0 4px; }
.tr { right: -2px; top: -2px; border-width: 4px 4px 0 0; }
.bl { left: -2px; bottom: -2px; border-width: 0 0 4px 4px; }
.br { right: -2px; bottom: -2px; border-width: 0 4px 4px 0; }
.tc, .bc { left: calc(50% - 5px); width: 11px; height: 3px; background: #999; }
.tc { top: -2px; }
.bc { bottom: -2px; }
.ml, .mr { top: calc(50% - 6px); width: 3px; height: 12px; background: #999; }
.ml { left: -2px; }
.mr { right: -2px; }
.vtools { position: absolute; right: -1px; top: -21px; display: flex; gap: 4px; }
.vtools button { width: 22px; height: 18px; background: #fff; }
.shead { display: flex; gap: 3px; padding: 0 4px 0 3px; color: #666; }
.shead b { flex: 1; font-size: 8px; line-height: 11px; color: #222; }
.slist { height: 136px; display: flex; flex-direction: column; font-size: 7px; color: #444; }
.slist label { flex: 1; display: flex; align-items: center; gap: 4px; padding-left: 14px; }
.slist .par { padding-left: 3px; }
.slist .kid { padding-left: 25px; }
.up { width: 7px; height: 7px; transform: rotate(180deg); color: #888; }
.slist input { appearance: none; width: 8px; height: 8px; margin: 0; border: 1px solid #999; background: #fff; }
.slist input:checked { background: #1c1c1c; border-color: #1c1c1c; }
.slist input.grayed { background: #444; border-color: #444; }
.slist input.some { background: #555; border: 1px solid #999; box-shadow: inset 0 0 0 1px #fff; }

.filters { width: 30px; background: #fff; display: flex; flex-direction: column; align-items: center; border-left: 1px solid #e2e2e2; padding-top: 13px; color: #222; }
.filters svg { margin-bottom: 16px; }
.filters > svg { margin: 0 0 9px 4px; }
.filters span { writing-mode: vertical-rl; font-size: 13px; font-weight: 600; line-height: 16px; }
.flip { transform: scaleX(-1); }

.pages { display: flex; height: 34px; background: #fff; border-bottom: 1px solid #ddd; }
.dev { width: 41px; padding-bottom: 4px; }
.dev.on { position: relative; }
.dev.on::after { content: ""; position: absolute; left: 9px; right: 9px; bottom: 4px; height: 3px; border-radius: 2px; background: #117865; }
.arr { width: 19px; }
.pages .ptab { width: 154px; padding-top: 3px; border-left: 1px solid #ccc; border-bottom: 3px solid #117865; font-weight: 600; font-size: 11px; white-space: nowrap; }
.padd { width: 36px; background: #117865; display: flex; align-items: center; justify-content: center; }

/* panes */
.viz, .fields { width: 170px; flex: none; border-left: 1px solid #ddd; display: flex; flex-direction: column; min-height: 0; }
.fields { width: 169px; }
.phead { display: flex; justify-content: space-between; align-items: center; height: 36px; padding: 0 9px 0 7px; flex: none; }
.phead h2 { font-size: 14px; font-weight: 600; color: #222; }
.sub { font-weight: 600; font-size: 10px; line-height: 15px; padding-left: 7px; }
.modes { display: flex; justify-content: space-between; padding: 2px 9px 11px 7px; border-bottom: 1px solid #dcdcdc; }
.mode { width: 30px; height: 30px; position: relative; }
.mode.on { background: #fff; }
.mode.on::after { content: ""; position: absolute; left: 10px; bottom: -16px; width: 9px; height: 9px; border: 1px solid #d0d0d0; border-width: 1px 0 0 1px; background: #f3f3f3; transform: rotate(45deg); }
.vgrid { display: grid; grid-template-columns: repeat(6, 1fr); grid-template-rows: repeat(8, 1fr); height: 211px; margin: 7px 6px 3px 5px; flex: none; }
.vgrid svg { width: 18px; height: 18px; overflow: visible; }
.picked { outline: 1px solid #555; outline-offset: -2px; background: #f9f9f9; }
.axis { fill: none; stroke: #333; stroke-width: 1.300; }
.wells { position: relative; flex: 1; min-height: 0; overflow: hidden; border-top: 1px solid #ddd; margin-bottom: 7px; padding-left: 4px; }
.wlabel { padding: 7px 0 5px 7px; line-height: 16px; }
.drop { border: 1px dotted #ccc; margin-right: 7px; padding: 1px 2px 6px 1px; display: flex; flex-direction: column; gap: 1px; }
.pill { display: flex; align-items: center; gap: 5px; height: 22px; padding: 0 3px; border: 1px solid #ddd; background: #fcfcfc; }
.pill span { flex: 1; }
.drill { font-weight: 600; padding: 9px 0 8px 7px; line-height: 16px; }
.cross { display: flex; justify-content: space-between; align-items: center; padding: 0 21px 0 7px; line-height: 15px; }
.toggle { display: flex; align-items: center; gap: 2px; width: 30px; height: 15px; border: 1px solid #555; border-radius: 8px; font-size: 8px; padding-left: 3px; }
.toggle::before { content: ""; width: 8px; height: 8px; border-radius: 4px; background: #555; }
.sbar { position: absolute; right: 0; top: 2px; width: 6px; height: 79px; border-radius: 3px; background: #666; }
.dsearch { display: flex; align-items: center; gap: 5px; height: 23px; margin: 7px 4px 8px 4px; padding: 0 9px; background: #fff; border: 1px solid #d6d6d6; border-bottom-color: #888; border-radius: 3px; flex: none; }
.field { justify-content: flex-start; gap: 4px; height: 23px; padding-left: 11px; }
.right { transform: rotate(-90deg); }
.over { overflow: visible; }

/* status */
.status { display: flex; align-items: center; justify-content: space-between; height: 22px; padding: 0 17px 0 4px; border-top: 1px solid #ddd; color: #444; }
.zoomer { display: flex; align-items: center; gap: 5px; }
.zoomer .plain { font-weight: 600; }
.zoomer .pct { margin: 0 14px 0 8px; }
input[type="range"] { appearance: none; width: 94px; height: 12px; margin: 0; background: linear-gradient(#666, #666) 50% 50% / 1px 5px no-repeat, linear-gradient(#999, #999) 0 50% / 100% 1px no-repeat; }
input[type="range"]::-webkit-slider-thumb { appearance: none; width: 4px; height: 11px; background: #333; }

/* taskbar */
.taskbar { display: flex; align-items: center; height: 46px; padding: 2px 19px 0; border-top: 1px solid #666; background: linear-gradient(90deg, #e6dcdb 0%, #ecd6cd 12%, #e2d9e0 22%, #d8deee 32%, #d9dcee 64%, #f5dfd0 75%, #f8e3c5 81%, #d5ddef 84%, #d6deee 100%); }
.tsearch { display: flex; align-items: center; gap: 10px; width: 205px; height: 29px; margin: 0 1px 0 13px; padding: 0 11px; border-radius: 15px; background: #faf6f7; border: 1px solid #ccc6cc; }
.apps { display: grid; grid-template-columns: repeat(13, 1fr); width: 537px; }
.apps button { height: 36px; }
.apps svg { width: 23px; height: 23px; }
.apps .cur { position: relative; background: #fbf5ee; border-radius: 3px; margin: 0 3px; }
.cur::after { content: ""; position: absolute; left: 10px; right: 10px; bottom: 0; height: 3px; border-radius: 2px; background: #1a6fb5; }
.tray { margin-left: auto; display: flex; align-items: center; gap: 7px; color: #222; }
.clock { text-align: right; line-height: 14px; margin-left: 7px; white-space: nowrap; }
.badge { width: 15px; height: 15px; border-radius: 8px; background: #0c74d1; color: #fff; font-size: 9px; line-height: 15px; text-align: center; }
```
